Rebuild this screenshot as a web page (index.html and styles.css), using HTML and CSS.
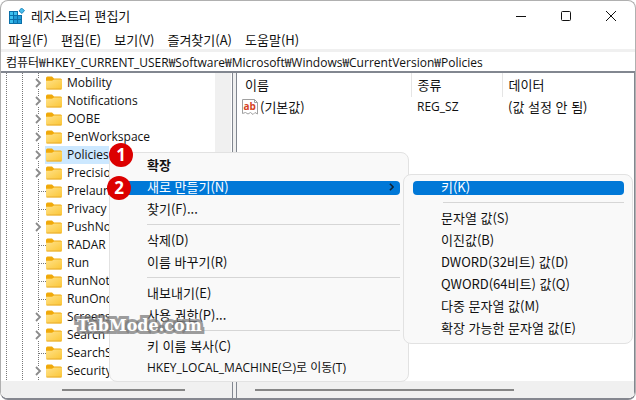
FILE: index.html
```html
<!DOCTYPE html>
<html lang="ko">
<head>
<meta charset="utf-8">
<title>레지스트리 편집기</title>
<link rel="stylesheet" href="styles.css">
</head>
<body>
<svg class="defs" aria-hidden="true">
  <defs>
    <linearGradient id="fold" x1="0" y1="0" x2="1" y2="1"><stop offset="0" stop-color="#ffe28a"/><stop offset="1" stop-color="#fbc534"/></linearGradient>
    <symbol id="folder" viewBox="0 0 16 14">
      <path d="M0 2.2Q0 .5 1.5.5H6L8 2.5H14.5Q16 2.5 16 4V8H0Z" fill="#f0a90a"/>
      <path d="M0 4.8H6L8 3.6H16V12.2Q16 13.4 14.8 13.4H1.2Q0 13.4 0 12.2Z" fill="url(#fold)"/>
      <path d="M.6 13H15.4" stroke="#e3a526" stroke-width=".8"/>
    </symbol>
    <symbol id="chev" viewBox="0 0 6 10"><path d="M1 1L5 5L1 9" fill="none" stroke="#8a8a8a" stroke-width="1.8"/></symbol>
  </defs>
</svg>
<div class="window">
  <header class="titlebar">
    <svg class="app-icon" viewBox="0 0 16 16">
      <path d="M0 3H9V7H13V16H0Z" fill="#0a6fa8"/>
      <path d="M1 4H4V7H1ZM5 4H8V7H5ZM1 8H4V11H1ZM1 12H4V15H1Z" fill="#3cc0ee"/>
      <path d="M5 8H8V11H5ZM9 8H12V11H9ZM5 12H8V15H5ZM9 12H12V15H9Z" fill="#1f9ad6"/>
      <path d="M12.500 0L15.500 2.500L13 5.500L10 3Z" fill="#49bdec" stroke="#0d78b4" stroke-width=".8"/>
    </svg>
    <h1 class="title">레지스트리 편집기</h1>
    <div class="caption">
      <button aria-label="최소화"><svg viewBox="0 0 12 12"><path d="M1 6.500H11"/></svg></button>
      <button aria-label="최대화"><svg viewBox="0 0 12 12"><rect x="1.500" y="1.500" width="9" height="9" rx="1"/></svg></button>
      <button aria-label="닫기"><svg viewBox="0 0 12 12"><path d="M1 1L11 11M11 1L1 11"/></svg></button>
    </div>
  </header>
  <nav class="menubar">
    <button>파일(F)</button><button>편집(E)</button><button>보기(V)</button><button>즐겨찾기(A)</button><button>도움말(H)</button>
  </nav>
  <input class="address latin" aria-label="주소" value="컴퓨터₩HKEY_CURRENT_USER₩Software₩Microsoft₩Windows₩CurrentVersion₩Policies">
  <main class="panes">
    <section class="pane tree-pane">
      <div class="tree-body">
        <ul class="tree latin">
          <li><svg class="chev"><use href="#chev"/></svg><svg class="folder"><use href="#folder"/></svg><span>Mobility</span></li>
          <li><svg class="chev"><use href="#chev"/></svg><svg class="folder"><use href="#folder"/></svg><span>Notifications</span></li>
          <li><svg class="chev"><use href="#chev"/></svg><svg class="folder"><use href="#folder"/></svg><span>OOBE</span></li>
          <li><svg class="chev"><use href="#chev"/></svg><svg class="folder"><use href="#folder"/></svg><span>PenWorkspace</span></li>
          <li class="selected"><svg class="chev"><use href="#chev"/></svg><svg class="folder"><use href="#folder"/></svg><span>Policies</span></li>
          <li><svg class="chev"><use href="#chev"/></svg><svg class="folder"><use href="#folder"/></svg><span>Precision</span></li>
          <li><i class="leaf"></i><svg class="folder"><use href="#folder"/></svg><span>Prelaunch</span></li>
          <li><i class="leaf"></i><svg class="folder"><use href="#folder"/></svg><span>Privacy</span></li>
          <li><svg class="chev"><use href="#chev"/></svg><svg class="folder"><use href="#folder"/></svg><span>PushNo</span></li>
          <li><i class="leaf"></i><svg class="folder"><use href="#folder"/></svg><span>RADAR</span></li>
          <li><i class="leaf"></i><svg class="folder"><use href="#folder"/></svg><span>Run</span></li>
          <li><i class="leaf"></i><svg class="folder"><use href="#folder"/></svg><span>RunNoti</span></li>
          <li><i class="leaf"></i><svg class="folder"><use href="#folder"/></svg><span>RunOnc</span></li>
          <li><svg class="chev"><use href="#chev"/></svg><svg class="folder"><use href="#folder"/></svg><span>Screens</span></li>
          <li><svg class="chev"><use href="#chev"/></svg><svg class="folder"><use href="#folder"/></svg><span>Search</span></li>
          <li><i class="leaf"></i><svg class="folder"><use href="#folder"/></svg><span>SearchS</span></li>
          <li><svg class="chev"><use href="#chev"/></svg><svg class="folder"><use href="#folder"/></svg><span>Security</span></li>
        </ul>
        <div class="vscroll"></div>
      </div>
      <div class="hscroll tree-scroll"><div class="thumb"></div></div>
    </section>
    <section class="pane list-pane">
      <table class="values">
        <thead><tr><th class="name">이름</th><th class="type">종류</th><th>데이터</th></tr></thead>
        <tbody><tr>
          <td><div class="value-name"><svg class="string-icon" viewBox="0 0 16 16"><path d="M.5.5H12.500L15.500 3.500V15L13 13.500L11 15.500L8.500 13.500L6 15L3.500 13.500L.5 14.500Z" fill="#fff" stroke="#a0a0a0"/><path d="M12.500.5V3.500H15.500" fill="none" stroke="#a0a0a0"/><text x="1.500" y="11" class="ab">ab</text></svg>(기본값)</div></td>
          <td class="latin">REG_SZ</td><td>(값 설정 안 됨)</td>
        </tr></tbody>
      </table>
      <div class="hscroll list-scroll"><div class="thumb"></div></div>
    </section>
  </main>
</div>
<div class="menu context-menu" role="menu">
  <button class="strong">확장</button>
  <button class="active">새로 만들기(N)<svg class="arrow" viewBox="0 0 6 10"><path d="M1 1L5 5L1 9"/></svg></button>
  <button>찾기(F)...</button>
  <hr>
  <button>삭제(D)</button>
  <button>이름 바꾸기(R)</button>
  <hr>
  <button>내보내기(E)</button>
  <button>사용 권한(P)...</button>
  <hr>
  <button>키 이름 복사(C)</button>
  <button class="latin">HKEY_LOCAL_MACHINE(으)로 이동(T)</button>
</div>
<div class="menu sub-menu" role="menu">
  <button class="active">키(K)</button>
  <hr>
  <button>문자열 값(S)</button>
  <button>이진값(B)</button>
  <button>DWORD(32비트) 값(D)</button>
  <button>QWORD(64비트) 값(Q)</button>
  <button>다중 문자열 값(M)</button>
  <button>확장 가능한 문자열 값(E)</button>
</div>
<span class="badge one">1</span>
<span class="badge two">2</span>
<span class="watermark">TabMode.com</span>
</body>
</html>
```
FILE: styles.css
```css
* { box-sizing: border-box; }
body {
  margin: 0;
  position: relative;
  background: #fff;
  color: #111;
  font: 13px/18px "Noto Sans CJK KR", sans-serif;
}
button, input { font: inherit; color: inherit; background: none; border: 0; padding: 0; margin: 0; }
.latin { font: 12px/18px "Open Sans", "Noto Sans CJK KR", sans-serif; }
.defs { position: absolute; width: 0; height: 0; }
.window {
  min-height: 100vh;
  display: flex;
  flex-direction: column;
  border: 1px solid #b0b0b0;
  border-bottom: 2px solid #85878f;
  border-radius: 8px;
  overflow: hidden;
}
.titlebar { display: flex; align-items: center; height: 29px; padding-left: 8px; }
.app-icon { width: 16px; height: 16px; margin-right: 6px; }
.title { margin: 0; font-size: 13px; font-weight: 400; flex: 1; }
.caption { display: flex; padding-right: 2px; }
.caption button { width: 45px; height: 28px; display: grid; place-items: center; }
.caption svg { width: 12px; height: 12px; fill: none; stroke: #111; }
.menubar { display: flex; gap: 13px; height: 19px; padding-left: 7px; }
.menubar button { line-height: 20px; }
.address {
  width: 100%;
  height: 24px;
  padding: 0 5px;
  border-top: 3px solid #f0f0f0;
  border-bottom: 2px solid #828790;
}
.panes { flex: 1; display: grid; grid-template-columns: 232px 1fr; gap: 3px; background: #f0f0f0; }
.pane { display: flex; flex-direction: column; background: #fff; min-width: 0; }
.tree-pane { border-right: 1px solid #828790; }
.list-pane { border-left: 1px solid #828790; border-right: 1px solid #828790; }
.tree-body { flex: 1; display: flex; padding-right: 1px; }
.vscroll { width: 16px; background: #f0f0f0; }
.tree {
  flex: 1;
  margin: 0;
  padding: 1px 0 0 5px;
  list-style: none;
  background:
    repeating-linear-gradient(#777 0 1px, transparent 1px 2px) 5px 0 / 1px 100% no-repeat,
    repeating-linear-gradient(#777 0 1px, transparent 1px 2px) 21px 0 / 1px 100% no-repeat,
    repeating-linear-gradient(#777 0 1px, transparent 1px 2px) 37px 0 / 1px 100% no-repeat;
}
.tree li { display: flex; align-items: center; height: 18px; padding-left: 28px; }
.chev { width: 8px; height: 10px; margin-right: 4px; background: #fff; }
.leaf { width: 7px; height: 1px; margin: 0 0 0 5px; background: repeating-linear-gradient(90deg, #777 0 1px, transparent 1px 2px); }
.folder { width: 16px; height: 14px; margin-right: 3px; }
.tree span { padding: 0 2px; }
.selected { background: linear-gradient(#cce8ff, #cce8ff) 39px 0 / 64px 18px no-repeat; }
.hscroll { height: 17px; background: #f0f0f0; padding-top: 8px; }
.thumb { height: 2px; background: #868686; }
.tree-scroll .thumb { margin: 0 47px 0 61px; }
.list-scroll .thumb { margin: 0 120px 0 18px; }
.values { width: 100%; border-collapse: collapse; table-layout: fixed; margin-bottom: auto; }
.values th, .values td { text-align: left; font-weight: 400; padding: 0 0 0 6px; }
.values th { height: 24px; }
.values td { height: 20px; }
.values th + th { border-left: 1px solid #e5e5e5; }
.values .name { width: 174px; padding-left: 8px; }
.values .type { width: 91px; }
.values td:first-child { padding-left: 5px; }
.value-name { display: flex; align-items: center; gap: 2px; }
.string-icon { width: 16px; height: 16px; }
.ab { font: bold 10px "Open Sans", sans-serif; fill: #d5431f; }
.menu {
  position: absolute;
  display: flex;
  flex-direction: column;
  padding: 1px 8px 2px 4px;
  background: #f9f9f9;
  border: 1px solid #e2e2e2;
  border-radius: 8px;
}
.menu button { display: flex; align-items: center; justify-content: space-between; height: 22px; text-align: left; padding: 0 6px 0 33px; white-space: nowrap; }
.menu hr { height: 1px; margin: 4px 0 4px 33px; border: 0; background: #d6d6d6; }
.menu .active { position: relative; z-index: 0; color: #fff; }
.menu .active::before { content: ""; position: absolute; inset: 5px 0 3px; z-index: -1; border-radius: 4px; background: #0078d7; }
.menu .strong { font-weight: 700; }
.arrow { width: 5px; height: 8px; fill: none; stroke: #123; stroke-width: 2; }
.context-menu { left: 109px; top: 152px; width: 300px; }
.sub-menu { left: 403px; top: 174px; width: 230px; padding-left: 9px; padding-bottom: 4px; }
.sub-menu button, .sub-menu hr { padding-left: 28px; }
.sub-menu hr { margin-left: 30px; padding: 0; }
.badge {
  position: absolute;
  width: 24px;
  height: 24px;
  border-radius: 50%;
  background: #dc0000;
  color: #fff;
  font: 700 17px/24px "Open Sans", sans-serif;
  text-align: center;
}
.one { left: 109px; top: 143px; }
.two { left: 107px; top: 176px; }
.watermark {
  position: absolute;
  left: 77px;
  top: 315px;
  font: bold 16px/22px "DejaVu Serif", serif;
  color: #fff;
  -webkit-text-stroke: 6px rgb(125 125 125 / .75);
  paint-order: stroke;
}
```
